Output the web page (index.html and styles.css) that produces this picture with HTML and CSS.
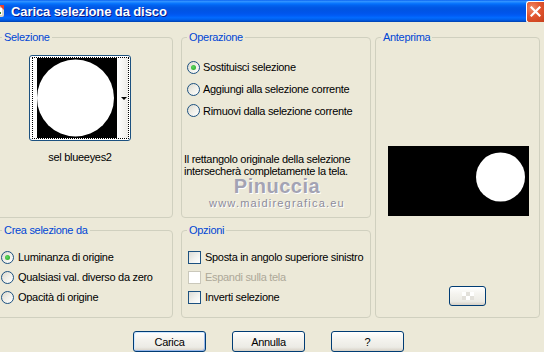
FILE: index.html
```html
<!DOCTYPE html>
<html lang="it">
<head>
  <meta charset="UTF-8" />
  <title>Carica selezione da disco</title>
  <link rel="stylesheet" href="styles.css">
</head>
<body>

  <div class="titlebar">
    <svg class="app-icon" width="16" height="16" viewBox="0 0 16 16">
      <rect x="1" y="3" width="13" height="11" rx="2" fill="#d8d4c8" />
      <rect x="3" y="5" width="9" height="7" fill="#ffffff" />
      <path d="M9 2 L14 2 L14 7 Z" fill="#e8402a" />
      <rect x="4" y="9" width="7" height="2" fill="#3a7f2a" />
    </svg>
    <span class="title">Carica selezione da disco</span>
    <div class="close-btn">
      <svg width="11" height="11" viewBox="0 0 11 11">
        <path d="M1.5 1.5 L9.5 9.5 M9.5 1.5 L1.5 9.5" stroke="#fff" stroke-width="2.2" stroke-linecap="square" />
      </svg>
    </div>
  </div>

  <div class="dialog">
    <fieldset class="group group-sel">
      <legend>Selezione</legend>
      <div class="thumb-wrap">
        <div class="thumb">
          <div class="thumb-inner">
            <svg class="thumb-img" width="80" height="80" viewBox="0 0 80 80">
              <rect width="80" height="80" fill="#000" />
              <circle cx="38.5" cy="40" r="38.5" fill="#fff" />
            </svg>
            <div class="thumb-strip"><span class="arrow"></span></div>
          </div>
        </div>
        <div class="thumb-name">sel blueeyes2</div>
      </div>
    </fieldset>

    <fieldset class="group group-op">
      <legend>Operazione</legend>
      <div class="options op-list">
        <label class="radio-row"><span class="radio checked"></span>Sostituisci selezione</label>
        <label class="radio-row"><span class="radio"></span>Aggiungi alla selezione corrente</label>
        <label class="radio-row"><span class="radio"></span>Rimuovi dalla selezione corrente</label>
      </div>
      <p class="info">Il rettangolo originale della selezione<br>intersecherà completamente la tela.</p>
    </fieldset>

    <fieldset class="group group-preview">
      <legend>Anteprima</legend>
      <svg class="preview" width="141" height="70" viewBox="0 0 141 70">
        <rect width="141" height="70" fill="#000" />
        <circle cx="112.5" cy="31" r="24.5" fill="#fff" />
      </svg>
      <button class="xp-btn small-btn">
        <svg width="18" height="10" viewBox="0 0 18 10">
          <rect x="3" y="1" width="4" height="4" fill="#fff" />
          <rect x="7" y="5" width="4" height="4" fill="#fff" />
          <rect x="11" y="1" width="4" height="4" fill="#fff" />
          <rect x="7" y="1" width="4" height="4" fill="#e2e0da" />
          <rect x="3" y="5" width="4" height="4" fill="#e2e0da" />
          <rect x="11" y="5" width="4" height="4" fill="#e2e0da" />
        </svg>
      </button>
    </fieldset>

    <fieldset class="group group-crea">
      <legend>Crea selezione da</legend>
      <div class="options crea-list">
        <label class="radio-row"><span class="radio checked"></span>Luminanza di origine</label>
        <label class="radio-row"><span class="radio"></span>Qualsiasi val. diverso da zero</label>
        <label class="radio-row"><span class="radio"></span>Opacità di origine</label>
      </div>
    </fieldset>

    <fieldset class="group group-opz">
      <legend>Opzioni</legend>
      <div class="options opz-list">
        <label class="check-row"><span class="check"></span>Sposta in angolo superiore sinistro</label>
        <label class="check-row disabled"><span class="check"></span>Espandi sulla tela</label>
        <label class="check-row"><span class="check"></span>Inverti selezione</label>
      </div>
    </fieldset>
  </div>

  <div class="buttons">
    <button class="xp-btn default">Carica</button>
    <button class="xp-btn">Annulla</button>
    <button class="xp-btn">?</button>
  </div>

  <div class="watermark">
    <div class="wm-name">Pinuccia</div>
    <div class="wm-url">www.maidiregrafica.eu</div>
  </div>

</body>
</html>
```

FILE: styles.css
```css
body {
  margin: 0;
  width: 544px;
  height: 352px;
  overflow: hidden;
  background: #ece9d8;
  font-family: "Liberation Sans", Arial, sans-serif;
  font-size: 11px;
  letter-spacing: -0.3px;
  color: #000;
}

/* title bar */
.titlebar {
  height: 22px;
  display: flex;
  align-items: center;
  background: linear-gradient(to bottom, #0058ee 0%, #3593ff 5%, #288eff 9%, #127dff 13%, #036ffc 18%, #0262ee 25%, #0057e5 35%, #0054e3 45%, #0055eb 60%, #005bf5 70%, #026afe 80%, #0062ef 88%, #0052d6 94%, #0040ab 100%);
  overflow: hidden;
}

.app-icon {
  margin-left: -10px;
  flex-shrink: 0;
}

.title {
  margin-left: 5px;
  color: #fff;
  font-weight: bold;
  font-size: 13px;
  letter-spacing: -0.1px;
  text-shadow: 1px 1px #0a1883;
}

.close-btn {
  margin-left: auto;
  width: 17px;
  height: 20px;
  margin-top: 1px;
  border: 1px solid #fff;
  border-right: none;
  border-radius: 3px 0 0 3px;
  background: radial-gradient(circle at 30% 30%, #f08a68 0%, #e2552f 45%, #c7401b 100%);
  display: flex;
  align-items: center;
  justify-content: center;
}

/* group boxes */
.dialog {
  display: grid;
  grid-template-columns: 185px 194px 165px;
  grid-template-rows: 187px 94px;
  row-gap: 6px;
  margin: 9px 0 0 -4px;
}

.group {
  margin: 0;
  padding: 0;
  border: 1px solid #d0d0bf;
  border-radius: 4px;
  min-width: 0;
}

.group legend {
  margin-left: 5px;
  padding: 0 2px;
  color: #0046d5;
  line-height: 13px;
}

.group-sel,
.group-crea {
  margin-right: 8px;
}

.group-op,
.group-opz {
  margin-right: 4px;
}

.group-preview {
  grid-column: 3;
  grid-row: 1 / 3;
}

.group-crea {
  grid-column: 1;
  grid-row: 2;
}

.group-opz {
  grid-column: 2;
  grid-row: 2;
}

/* selection thumbnail */
.thumb-wrap {
  width: 102px;
  margin: 11px 0 0 32px;
}

.thumb {
  box-sizing: border-box;
  height: 86px;
  padding: 1px 1px 1px 2px;
  border: 1px solid #1c5180;
  border-radius: 3px;
  background: #fff;
}

.thumb-inner {
  height: 100%;
  box-sizing: border-box;
  border: 1px dotted #000;
  display: flex;
  padding-left: 4px;
}

.thumb-img {
  display: block;
}

.thumb-strip {
  flex: 1;
  background: linear-gradient(to right, #ffffff, #ecebe8);
  display: flex;
  align-items: center;
  justify-content: flex-end;
  padding-right: 1px;
}

.arrow {
  width: 0;
  height: 0;
  border-left: 3px solid transparent;
  border-right: 3px solid transparent;
  border-top: 3px solid #000;
}

.thumb-name {
  margin-top: 10px;
  line-height: 13px;
  text-align: center;
}

/* radios and checkboxes */
.options {
  display: flex;
  flex-direction: column;
}

.radio-row,
.check-row {
  display: flex;
  align-items: center;
  gap: 4px;
  white-space: nowrap;
}

.op-list {
  margin: 12px 0 0 5px;
}

.op-list .radio-row {
  height: 22px;
  gap: 3px;
}

.op-list .radio-row:last-child {
  height: 21px;
}

.crea-list {
  margin: 10px 0 0 4px;
}

.crea-list .radio-row,
.opz-list .check-row {
  height: 20px;
}

.opz-list {
  margin: 10px 0 0 6px;
}

.radio {
  box-sizing: border-box;
  width: 13px;
  height: 13px;
  border: 1px solid #1c5180;
  border-radius: 50%;
  background: linear-gradient(135deg, #dcd9cd 0%, #f0efe9 50%, #ffffff 100%);
  display: flex;
  align-items: center;
  justify-content: center;
  flex-shrink: 0;
}

.radio.checked::after {
  content: "";
  width: 5px;
  height: 5px;
  border-radius: 50%;
  background: radial-gradient(circle at 40% 40%, #5fd85f, #21a121);
}

.check {
  box-sizing: border-box;
  width: 13px;
  height: 13px;
  border: 1px solid #1c5180;
  background: linear-gradient(135deg, #dcdcd7 0%, #f2f2ee 55%, #ffffff 100%);
  flex-shrink: 0;
}

.check-row.disabled {
  color: #aca899;
}

.check-row.disabled .check {
  border-color: #cac8bb;
  background: #fff;
}

.info {
  margin: 32px 0 0 2px;
  line-height: 12px;
}

/* preview */
.preview {
  display: block;
  margin: 102px 0 0 12px;
}

.small-btn {
  display: flex;
  align-items: center;
  justify-content: center;
  width: 37px;
  height: 20px;
  margin: 70px 0 0 73px;
  padding: 0;
}

/* buttons */
.xp-btn {
  box-sizing: border-box;
  border: 1px solid #003c74;
  border-radius: 3px;
  background: linear-gradient(to bottom, #ffffff 0%, #f4f3ee 40%, #ecebe5 80%, #d6d0c5 100%);
  font-family: inherit;
  font-size: 11px;
  letter-spacing: -0.3px;
  color: #000;
}

.buttons {
  display: flex;
  gap: 26px;
  margin: 13px 0 0 133px;
}

.buttons .xp-btn {
  width: 73px;
  height: 21px;
  padding: 0;
}

.xp-btn.default {
  box-shadow: inset 1px 1px #cee7ff, inset -1px -1px #98b8ea;
}

/* watermark */
.watermark {
  position: absolute;
  left: 196px;
  top: 178px;
  width: 162px;
  text-align: center;
}

.wm-name {
  font-size: 20px;
  line-height: 16px;
  font-weight: bold;
  letter-spacing: 0.5px;
  color: #a3a3b3;
  text-shadow: 1px 1px #fff;
}

.wm-url {
  margin-top: 3px;
  font-size: 11px;
  line-height: 13px;
  letter-spacing: 1.2px;
  color: #8c8c9c;
  text-shadow: 1px 1px #fff;
}
```
